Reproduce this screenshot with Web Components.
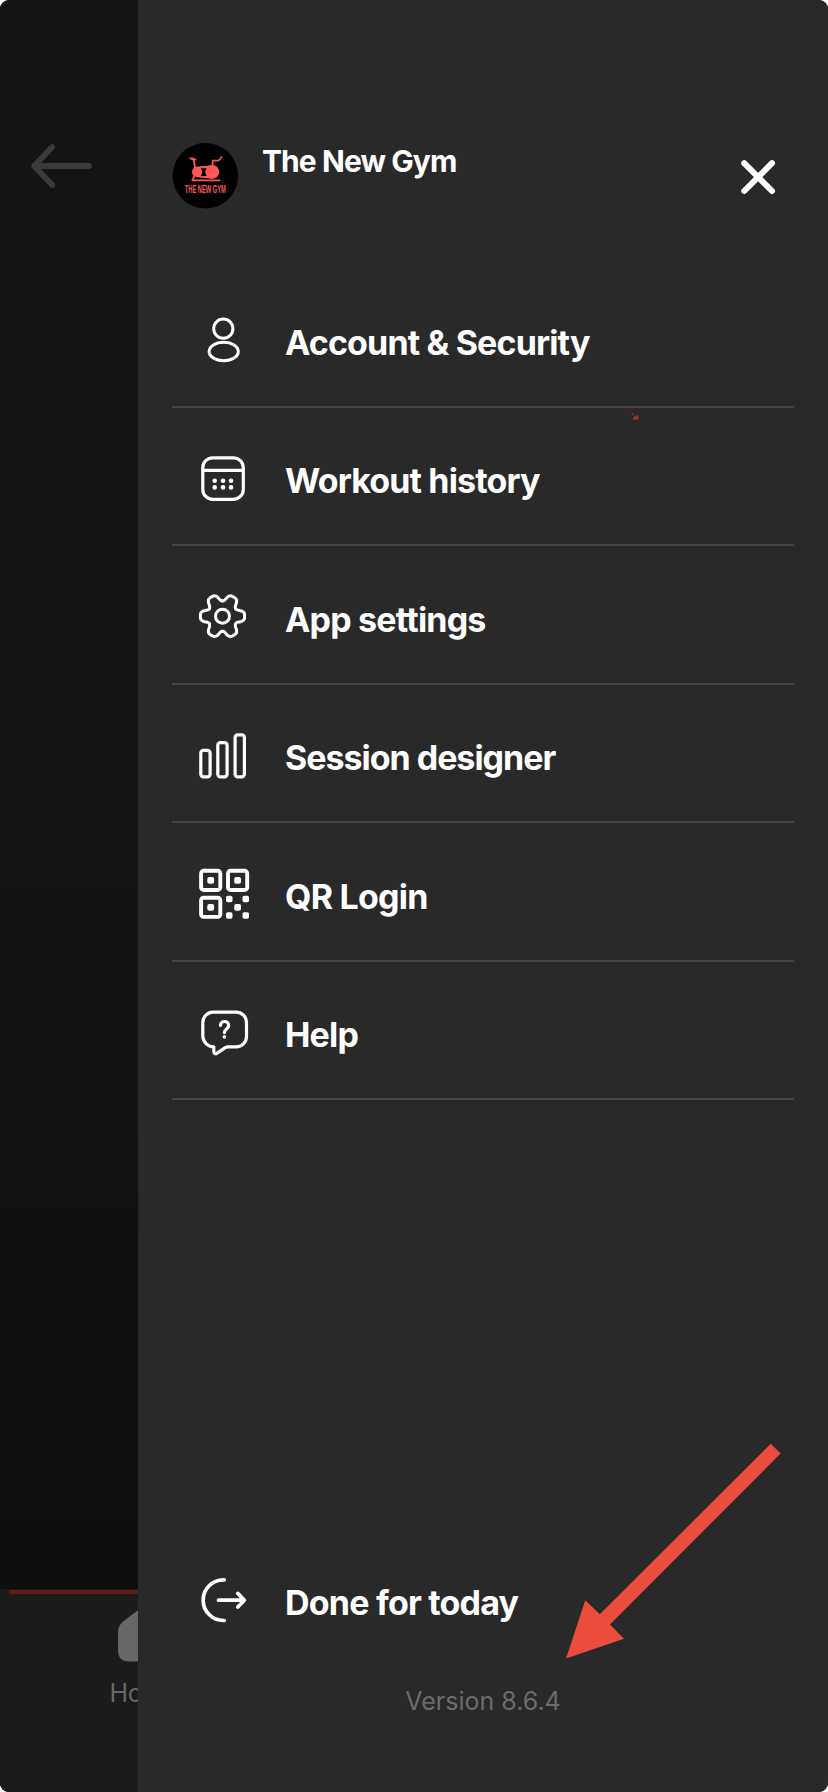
<!DOCTYPE html>
<html lang="en">
<head>
<meta charset="utf-8">
<title>The New Gym</title>
<style>
  body {
    margin: 0;
    background: #fff;
    font-family: Inter, "Liberation Sans", sans-serif;
  }
</style>
</head>
<body>

<gym-app>
  <gym-home-page slot="page">Home</gym-home-page>
  <gym-drawer>
    <gym-profile slot="profile">The New Gym</gym-profile>
    <gym-menu-item icon="account" style="--spacing:-0.85px">Account &amp; Security</gym-menu-item>
    <gym-menu-item icon="calendar" style="--spacing:-0.87px">Workout history</gym-menu-item>
    <gym-menu-item icon="gear" style="--spacing:-0.8px">App settings</gym-menu-item>
    <gym-menu-item icon="bars" style="--spacing:-1.02px">Session designer</gym-menu-item>
    <gym-menu-item icon="qr" style="--spacing:-0.75px">QR Login</gym-menu-item>
    <gym-menu-item icon="help" style="--spacing:-0.8px">Help</gym-menu-item>
    <gym-menu-item slot="footer" icon="logout" plain style="--spacing:-0.8px">Done for today</gym-menu-item>
    <span slot="version">Version 8.6.4</span>
  </gym-drawer>
  <gym-pointer slot="overlay"></gym-pointer>
</gym-app>

<script>
  // all icons share a 64x64 box
  const icons = {
    account: `
      <g stroke-width="3">
        <circle cx="33.3" cy="20.7" r="9.6"/>
        <ellipse cx="33.7" cy="43.5" rx="14.6" ry="9.3"/>
      </g>`,
    calendar: `
      <rect x="12.8" y="11.8" width="40.5" height="41.6" rx="10"/>
      <path d="M13 24.4h40"/>
      <g fill="currentColor" stroke="none">
        <circle cx="24.7" cy="34.8" r="2.3"/><circle cx="33" cy="34.8" r="2.3"/><circle cx="41" cy="34.8" r="2.3"/>
        <circle cx="24.7" cy="41.4" r="2.3"/><circle cx="33" cy="41.4" r="2.3"/><circle cx="41" cy="41.4" r="2.3"/>
      </g>`,
    gear: (() => {
      // one tooth, turned six times
      const tooth = 'M13.1-7.6C14.3-5.6 15.2-6.1 17.2-5.7C20.4-5.2 22.1-3.8 22.1-1.4V1.4C22.1 3.8 20.4 5.2 17.2 5.7C15.2 6.1 14.3 5.6 13.1 7.6';
      let teeth = '';
      for (let a = 0; a < 360; a += 60) teeth += `<path d="${tooth}" transform="rotate(${a})"/>`;
      return `<g transform="translate(32.5 32.2)" stroke-width="3">${teeth}<circle r="7"/></g>`;
    })(),
    bars: `
      <rect x="10.8" y="27.3" width="9.3" height="26.5" rx="2.6"/>
      <rect x="27.8" y="19.6" width="9.3" height="34.2" rx="2.6"/>
      <rect x="45.1" y="11.8" width="9.3" height="42" rx="2.6"/>`,
    qr: `
      <g stroke-width="3.9">
        <rect x="11.1" y="9.8" width="19.2" height="19.2" rx="2.6"/>
        <rect x="38" y="9.8" width="19.2" height="19.2" rx="2.6"/>
        <rect x="11.1" y="36.7" width="19.2" height="19.2" rx="2.6"/>
      </g>
      <g fill="currentColor" stroke="none">
        <rect x="17.3" y="16" width="6.8" height="6.8" rx="2"/>
        <rect x="44.2" y="16" width="6.8" height="6.8" rx="2"/>
        <rect x="17.3" y="42.9" width="6.8" height="6.8" rx="2"/>
        <rect x="44.2" y="42.9" width="6.8" height="6.8" rx="2"/>
        <rect x="36" y="34.8" width="6.5" height="6.5" rx="1.8"/>
        <rect x="52.5" y="34.8" width="6.5" height="6.5" rx="1.8"/>
        <rect x="36" y="51.3" width="6.5" height="6.5" rx="1.8"/>
        <rect x="52.5" y="51.3" width="6.5" height="6.5" rx="1.8"/>
      </g>`,
    help: `
      <path d="M23.2 12.2H46.2A10.3 10.3 0 0 1 56.5 22.5V36.5A10.3 10.3 0 0 1 46.2 46.8H37.5C35 47 30.5 51.2 27 53.2C25 54.2 23.8 53.2 23.8 51.2V46.8A11 11 0 0 1 12.8 35.8V22.5A10.3 10.3 0 0 1 23.2 12.2Z"/>
      <path d="M30.4 25.4C30.6 20.2 38.8 20.2 38.7 25.6C38.6 29 34.4 29 34.4 32.6"/>
      <circle cx="34.4" cy="36.9" r="1.8" fill="currentColor" stroke="none"/>`,
    logout: `
      <g stroke-width="3.7">
        <path d="M34.2 12.8H33.5A20.3 20.3 0 0 0 33.5 53.5H34.2"/>
        <path d="M28.5 33.2H54M47.8 26.4L54.4 33.2L47.8 40"/>
      </g>`
  };

  class GymApp extends HTMLElement {
    constructor() {
      super();
      this.attachShadow({ mode: 'open' }).innerHTML = `
        <style>
          :host {
            display: grid;
            grid-template-columns: 138px 1fr;
            position: relative;
            height: 1792px;
            border-radius: 9px;
            overflow: hidden;
            background: #292929;
          }
        </style>
        <slot name="page"></slot>
        <slot></slot>
        <slot name="overlay"></slot>
      `;
    }
  }

  // the page left visible behind the drawer
  class GymHomePage extends HTMLElement {
    constructor() {
      super();
      this.attachShadow({ mode: 'open' }).innerHTML = `
        <style>
          :host {
            display: flex;
            flex-direction: column;
            overflow: hidden;
            background: linear-gradient(#141414, #131313 50%, #0f0f0f 85%);
          }
          .content {
            height: 1589px;
            flex: none;
          }
          .back {
            display: block;
            margin: 140px 0 0 28px;
          }
          .tabbar {
            flex: 1;
            background: #1b1b1b;
            padding: 1px 0 0 9px;
          }
          .progress {
            height: 4px;
            background: #5f1d1a;
          }
          .tab {
            display: flex;
            flex-direction: column;
            align-items: center;
            width: 68px;
            margin: 11px 0 0 101px;
            color: #676767;
            font-size: 25px;
            line-height: 32px;
            letter-spacing: -0.3px;
          }
          .tab svg {
            display: block;
            margin-bottom: 15px;
          }
        </style>
        <div class="content">
          <svg class="back" width="68" height="52" fill="none" stroke="#3b3b3b" stroke-width="5.8" stroke-linecap="round" stroke-linejoin="round">
            <path d="M61 26H6.2M24.2 7L6.2 26L24.2 45"/>
          </svg>
        </div>
        <div class="tabbar">
          <div class="progress"></div>
          <div class="tab">
            <svg width="52" height="57" fill="#676767">
              <path d="M21 4.5Q26 1 31 4.5L47 16.5Q52 21 52 27V45Q52 56.5 41 56.5H11Q0 56.5 0 45V27Q0 21 5 16.5Z"/>
            </svg>
            <slot></slot>
          </div>
        </div>
      `;
    }
  }

  class GymDrawer extends HTMLElement {
    constructor() {
      super();
      this.attachShadow({ mode: 'open' }).innerHTML = `
        <style>
          :host {
            display: flex;
            flex-direction: column;
            box-sizing: border-box;
            height: 1792px;
            padding: 0 34px;
            background: #292929;
            color: #fff;
          }
          nav {
            display: flex;
            flex-direction: column;
          }
          footer {
            margin-top: auto;
            height: 262.7px;
          }
          .version {
            margin-top: 15px;
            text-align: center;
            font-size: 25px;
            line-height: 36px;
            color: #6c6c6c;
          }
        </style>
        <slot name="profile"></slot>
        <nav><slot></slot></nav>
        <footer>
          <slot name="footer"></slot>
          <div class="version"><slot name="version"></slot></div>
        </footer>
      `;
    }
  }

  class GymProfile extends HTMLElement {
    constructor() {
      super();
      this.attachShadow({ mode: 'open' }).innerHTML = `
        <style>
          :host {
            display: flex;
            align-items: flex-start;
            box-sizing: border-box;
            height: 269.6px;
            padding-top: 142px;
          }
          h1 {
            flex: 1;
            margin: 0 0 0 23px;
            font-size: 30px;
            font-weight: 700;
            line-height: 38px;
            letter-spacing: -0.93px;
          }
          .logo {
            overflow: visible;
          }
          .close {
            margin: 14px 15px 0 0;
          }
        </style>
        <svg class="logo" width="67" height="67">
          <circle cx="33.4" cy="33.8" r="32.8" fill="#000"/>
          <g fill="none" stroke="#fe5757" stroke-width="1.7" stroke-linecap="round" stroke-linejoin="round">
            <path d="M21.6 18L23.4 27M40.6 26V18.7Q47.6 18.9 48.3 17Q48.6 15.4 49.6 15"/>
            <path d="M22.6 34L20.3 38.3H47.6"/>
            <path d="M24.5 25.5L40.4 23.8M24.5 34.3L40.4 36.2" stroke-width="1.3"/>
          </g>
          <g fill="#fe5757">
            <path d="M17 15.6Q20 15.2 24.4 17Q24.6 18.5 22 18.6Q17.5 18 17 15.6Z"/>
            <path d="M24.9 25.1L40.4 23.4V36.3L24.9 34.7Z"/>
            <circle cx="24.9" cy="30" r="4.9"/>
            <circle cx="40.4" cy="29.8" r="6.9"/>
          </g>
          <path d="M28.6 26.2H34.8Q33.2 28 33.2 30T34.8 34H28.6Q30.2 32 30.2 30T28.6 26.2Z" fill="#000"/>
          <text x="12.8" y="51" textLength="41" lengthAdjust="spacingAndGlyphs" fill="#fe5757" font-family="Liberation Sans Narrow, Liberation Sans, sans-serif" font-weight="700" font-size="10.4">THE NEW GYM</text>
        </svg>
        <h1><slot></slot></h1>
        <svg class="close" width="42" height="42" fill="none" stroke="#fff" stroke-width="6" stroke-linecap="round">
          <path d="M7.2 7.2L35 35M35 7.2L7.2 35"/>
        </svg>
      `;
    }
  }

  class GymMenuItem extends HTMLElement {
    constructor() {
      super();
      this.attachShadow({ mode: 'open' }).innerHTML = `
        <style>
          :host {
            display: flex;
            align-items: flex-start;
            box-sizing: border-box;
            height: 138.4px;
            padding-left: 18px;
            border-bottom: 2px solid #464646;
          }
          :host([plain]) {
            border-bottom-color: transparent;
          }
          svg {
            flex: none;
            margin-top: 38px;
          }
          span {
            margin: 53.5px 0 0 31px;
            font-size: 34px;
            font-weight: 700;
            line-height: 40px;
            letter-spacing: var(--spacing);
            white-space: nowrap;
          }
        </style>
        <svg width="64" height="64" fill="none" stroke="currentColor" stroke-width="3.2" stroke-linecap="round" stroke-linejoin="round">
          ${icons[this.getAttribute('icon')]}
        </svg>
        <span><slot></slot></span>
      `;
    }
  }

  // marks drawn over the drawer: big arrow and a tiny red speck
  class GymPointer extends HTMLElement {
    constructor() {
      super();
      this.attachShadow({ mode: 'open' }).innerHTML = `
        <style>
          :host {
            display: block;
          }
          svg {
            position: absolute;
          }
          .arrow {
            left: 560px;
            top: 1440px;
          }
          .speck {
            left: 630px;
            top: 411px;
          }
        </style>
        <svg class="arrow" width="224" height="222">
          <path d="M6 218.5L25.3 160.3L39.8 174.3L210.7 3.8L220.6 13.5L50 184.4L64 198.8Z" fill="#eb4d3d"/>
        </svg>
        <svg class="speck" width="10" height="11" fill="#d23432">
          <path d="M1 1.5L3.5 2.5L4.5 4.5L2.5 3.8Z" opacity=".7"/>
          <path d="M3.4 6L5.5 5.2L7.6 3.8L8.4 6.5L8.2 9.2L6.6 8.6L5.6 7.4L4.6 9L3 8.6Z" opacity=".8"/>
        </svg>
      `;
    }
  }

  customElements.define('gym-app', GymApp);
  customElements.define('gym-home-page', GymHomePage);
  customElements.define('gym-drawer', GymDrawer);
  customElements.define('gym-profile', GymProfile);
  customElements.define('gym-menu-item', GymMenuItem);
  customElements.define('gym-pointer', GymPointer);
</script>
</body>
</html>
